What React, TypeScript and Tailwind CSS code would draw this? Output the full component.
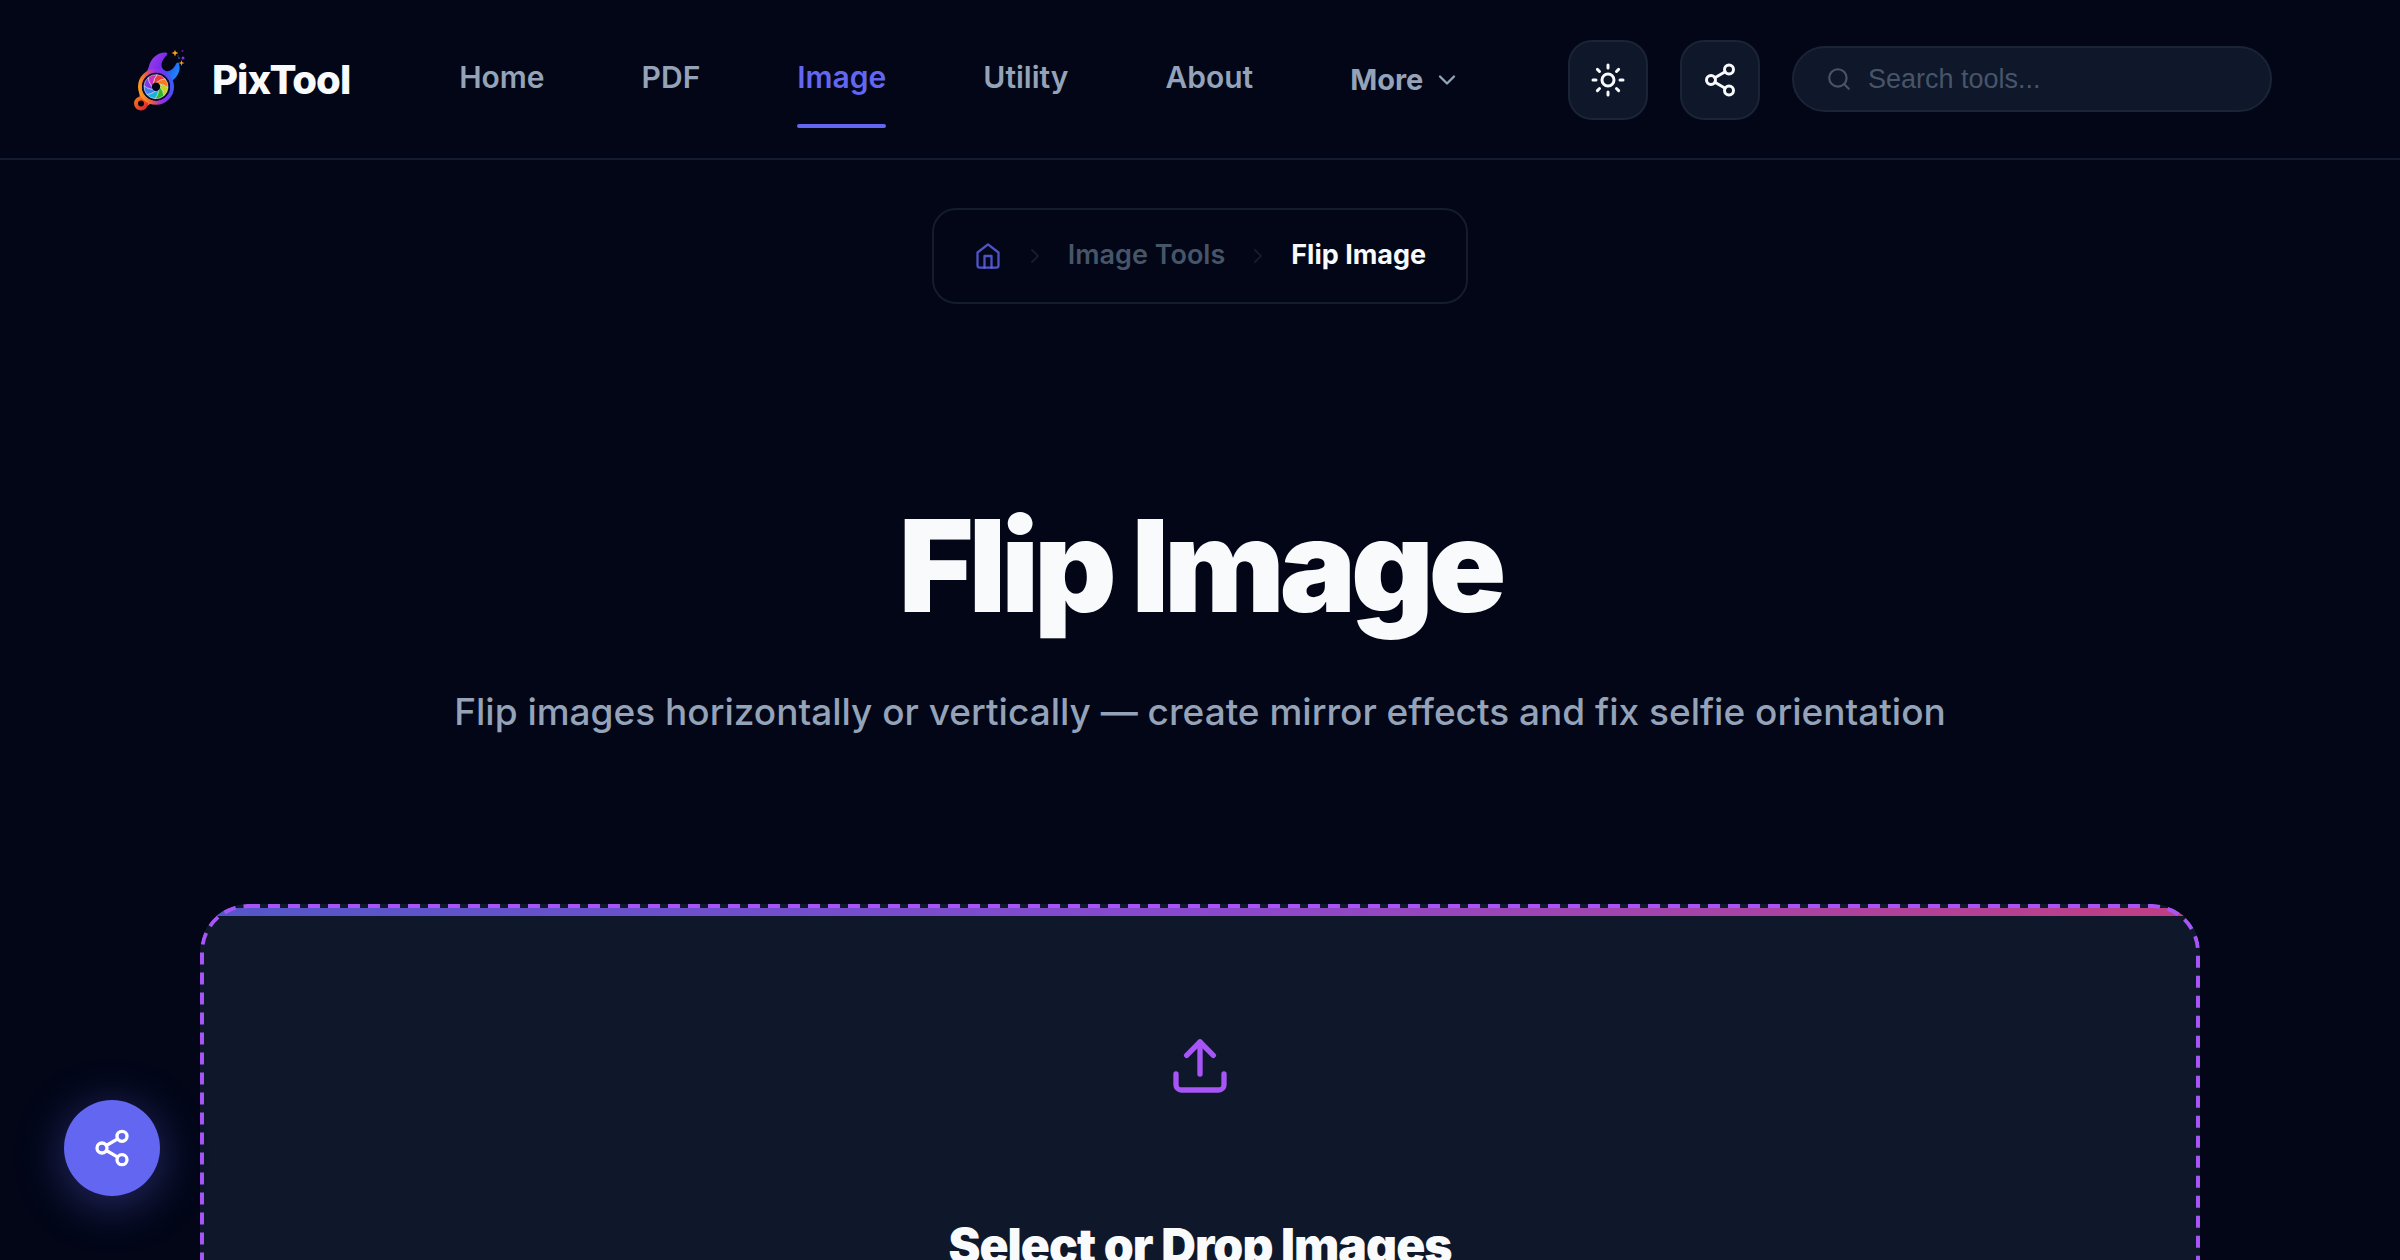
import { ChevronDown, ChevronRight, Search, Share2, Sun, Upload } from "lucide-react";

const NAV_LINKS = [
  { label: "Home", active: false },
  { label: "PDF", active: false },
  { label: "Image", active: true },
  { label: "Utility", active: false },
  { label: "About", active: false },
];

const BLADES = [
  { angle: 0, color: "#ef3b3b" },
  { angle: 45, color: "#f97a1e" },
  { angle: 90, color: "#c9d322" },
  { angle: 135, color: "#35b52a" },
  { angle: 180, color: "#19b3d8" },
  { angle: 225, color: "#3f7df0" },
  { angle: 270, color: "#7c3aed" },
  { angle: 315, color: "#c92fc0" },
];

function Logo() {
  return (
    <svg viewBox="0 0 64 64" className="size-16 shrink-0" aria-hidden="true">
      <defs>
        <linearGradient id="ring" x1="0" y1="0.6" x2="1" y2="0.4">
          <stop offset="0" stopColor="#fb9a1e" />
          <stop offset="0.25" stopColor="#f0603a" />
          <stop offset="0.55" stopColor="#a02ee0" />
          <stop offset="0.8" stopColor="#6d35f0" />
          <stop offset="1" stopColor="#3b5cf5" />
        </linearGradient>
        <linearGradient id="jaw" x1="0" y1="0.2" x2="1" y2="0.6">
          <stop offset="0" stopColor="#a443ee" />
          <stop offset="0.5" stopColor="#7a2bea" />
          <stop offset="0.75" stopColor="#2a5cf5" />
          <stop offset="1" stopColor="#1d86fa" />
        </linearGradient>
        <linearGradient id="tail" x1="0" y1="0" x2="1" y2="1">
          <stop offset="0" stopColor="#f97316" />
          <stop offset="1" stopColor="#e0242e" />
        </linearGradient>
      </defs>
      <path
        d="M16 30C18 24 20 22 21 18C23 10 30 4 38 4.500C40 5 39.500 6.500 38 8C33 13 32 19 36 22C40 25 45 22 48 16C49 14 51 14 51 16C53 22 50 28 45 32Z"
        fill="url(#jaw)"
      />
      <path d="M12 43L11 52L17 59L24 55Z" fill="#f2601f" />
      <circle cx="13" cy="55.500" r="5" fill="#020617" stroke="url(#tail)" strokeWidth="4" />
      <circle cx="28" cy="38.700" r="16" fill="none" stroke="url(#ring)" strokeWidth="4" />
      <circle cx="28" cy="38.700" r="14" fill="#0b0f2c" />
      {BLADES.map((blade) => (
        <path
          key={blade.angle}
          d="M28 34.700Q33 31 37.200 31A12 12 0 0 0 29 26.700Q26.100 29.700 25.200 35.900Z"
          fill={blade.color}
          stroke="#f8fafc"
          strokeWidth="0.5"
          transform={`rotate(${blade.angle} 28 38.700)`}
        />
      ))}
      <circle cx="28" cy="38.700" r="4.200" fill="#020617" />
      <path d="M47 2L48 4L50.500 5L48 6L47 8.500L46 6L43.500 5L46 4Z" fill="#f59e1b" />
      <path d="M53.500 12L54.200 14.200L56.500 15L54.200 15.800L53.500 18L52.800 15.800L50.500 15L52.800 14.200Z" fill="#f59e1b" />
      <circle cx="54.500" cy="3" r="1" fill="#6b21a8" />
      <circle cx="55" cy="10" r="1.500" fill="#8b2be0" />
      <circle cx="51" cy="10" r="1" fill="#1d4f9f" />
      <circle cx="50" cy="8" r="0.700" fill="#1d4f9f" />
    </svg>
  );
}

function HomeIcon() {
  return (
    <svg
      viewBox="0 0 24 24"
      className="size-7"
      fill="none"
      stroke="currentColor"
      strokeWidth="2"
      strokeLinecap="round"
      strokeLinejoin="round"
      aria-hidden="true"
    >
      <path d="M3 9l9-7 9 7v11a2 2 0 0 1-2 2H5a2 2 0 0 1-2-2z" />
      <path d="M9 22V12h6v10" />
    </svg>
  );
}

function Header() {
  return (
    <header className="flex h-40 shrink-0 items-center border-b-2 border-[#151c2f] bg-[#020617] px-32 pt-0.5">
      <a href="#" className="flex items-center gap-5 text-[40px] font-extrabold tracking-[-1px] text-slate-50">
        <Logo />
        PixTool
      </a>
      <nav className="ml-[109px] flex items-center gap-[97px] text-[30px]/[48px]">
        {NAV_LINKS.map((link) => (
          <a
            key={link.label}
            href="#"
            className={
              link.active
                ? "relative pb-1.5 font-semibold text-[#6366f1] after:absolute after:inset-x-0 after:-bottom-[21px] after:h-1 after:rounded-full after:bg-[#6366f1]"
                : "pb-1.5 font-semibold text-[#94a3b8]"
            }
          >
            {link.label}
          </a>
        ))}
        <button type="button" className="flex items-center gap-2.5 text-[29px] font-bold text-[#94a3b8]">
          More
          <ChevronDown className="size-7" />
        </button>
      </nav>
      <div className="ml-auto flex items-center gap-8">
        <button
          type="button"
          aria-label="Toggle theme"
          className="flex size-20 items-center justify-center rounded-3xl border-2 border-[#1b2435] bg-[#0f172a] text-slate-50"
        >
          <Sun className="size-9" />
        </button>
        <button
          type="button"
          aria-label="Share"
          className="flex size-20 items-center justify-center rounded-3xl border-2 border-[#1b2435] bg-[#0f172a] text-slate-50"
        >
          <Share2 className="size-9" />
        </button>
        <label className="mb-0.5 flex h-[66px] w-[480px] items-center gap-4 rounded-full border-2 border-[#1b2435] bg-[#0f172a] px-8 text-[#475569]">
          <Search className="size-[26px] shrink-0" />
          <input
            type="search"
            aria-label="Search tools"
            placeholder="Search tools..."
            className="w-full min-w-0 bg-transparent font-['Liberation_Sans',sans-serif] text-[27px] outline-none placeholder:text-[#475569]"
          />
        </label>
      </div>
    </header>
  );
}

function Breadcrumb() {
  return (
    <nav
      aria-label="Breadcrumb"
      className="flex h-24 items-center gap-[21px] rounded-3xl border-2 border-[#151c2b] px-10 text-[27px]"
    >
      <a href="#" aria-label="Home" className="text-[#6366f1]/80">
        <HomeIcon />
      </a>
      <ChevronRight className="size-6 text-[#151c2b]" />
      <a href="#" className="pb-0.5 font-semibold text-[#475569]">
        Image Tools
      </a>
      <ChevronRight className="size-6 text-[#151c2b]" />
      <span className="pb-0.5 font-bold text-slate-50">Flip Image</span>
    </nav>
  );
}

function DropZone() {
  return (
    <section className="relative mt-40 flex h-[720px] w-full max-w-[2000px] shrink-0 flex-col items-center overflow-hidden rounded-[48px] bg-[#0f172a] pt-[130px]">
      <div className="absolute inset-x-1 top-1 h-2 bg-linear-to-r/srgb from-[#6366f1] via-[#a855f7] to-[#ec4899] opacity-80" />
      {/* Dashed outline */}
      <svg className="absolute inset-0 size-full" aria-hidden="true">
        <rect
          x="2"
          y="2"
          rx="46"
          className="h-[calc(100%-4px)] w-[calc(100%-4px)]"
          fill="none"
          stroke="#a855f7"
          strokeWidth="4"
          strokeDasharray="12 8"
        />
      </svg>
      <Upload className="size-16 text-[#a855f7]" />
      <h2 className="mt-[124px] text-5xl font-black tracking-[-0.02em] text-slate-50">Select or Drop Images</h2>
    </section>
  );
}

export default function App() {
  return (
    <div className="flex h-screen flex-col overflow-hidden bg-[#020617] font-['Inter',sans-serif]">
      <Header />
      <main className="flex flex-col items-center px-16 pt-12">
        <Breadcrumb />
        <h1 className="mt-48 text-[128px]/[140px] font-black tracking-[-0.04em] text-slate-50">Flip Image</h1>
        <p className="mt-11 text-[37px]/[64px] font-medium text-[#94a3b8]">
          Flip images horizontally or vertically — create mirror effects and fix selfie orientation
        </p>
        <DropZone />
      </main>
      <button
        type="button"
        aria-label="Share this page"
        className="fixed bottom-16 left-16 flex size-24 items-center justify-center rounded-full bg-[#6366f1] text-white shadow-[0_8px_48px_rgba(99,102,241,0.4)]"
      >
        <Share2 className="size-10" />
      </button>
    </div>
  );
}
